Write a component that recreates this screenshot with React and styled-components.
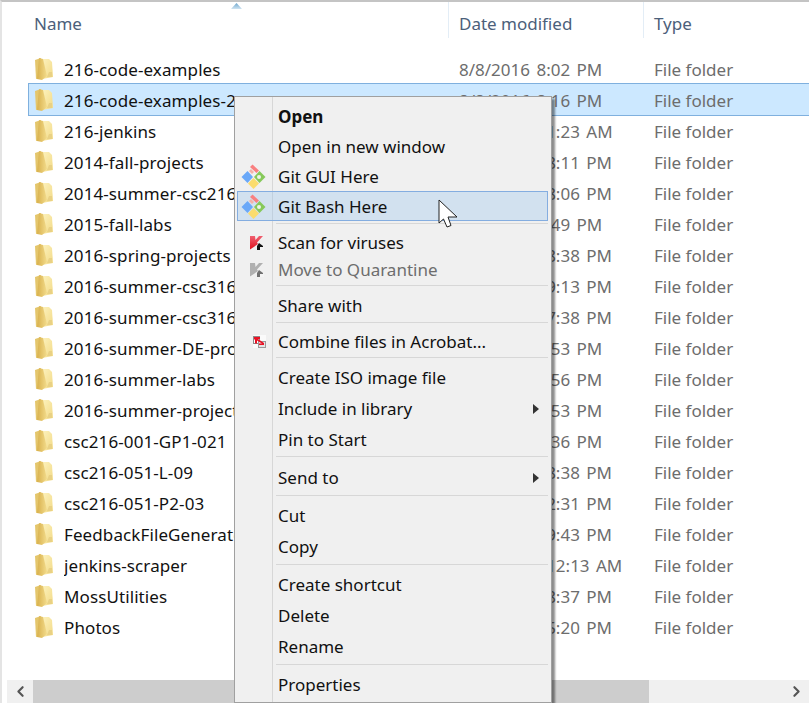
import React from 'react';
import styled, { createGlobalStyle } from 'styled-components';
import { ChevronLeft, ChevronRight } from 'lucide-react';

const folders = [
  ['216-code-examples', '8/8/2016 8:02 PM'],
  ['216-code-examples-2', '8/8/2016 8:16 PM', true],
  ['216-jenkins', '8/10/2016 1:23 AM'],
  ['2014-fall-projects', '12/9/2014 8:11 PM'],
  ['2014-summer-csc216', '8/12/2014 8:06 PM'],
  ['2015-fall-labs', '1/8/2016 4:49 PM'],
  ['2016-spring-projects', '5/10/2016 8:38 PM'],
  ['2016-summer-csc316-001', '8/11/2016 9:13 PM'],
  ['2016-summer-csc316-051', '8/11/2016 7:38 PM'],
  ['2016-summer-DE-projects', '7/8/2016 5:53 PM'],
  ['2016-summer-labs', '7/8/2016 5:56 PM'],
  ['2016-summer-projects', '7/8/2016 5:53 PM'],
  ['csc216-001-GP1-021', '2/2/2016 6:36 PM'],
  ['csc216-051-L-09', '5/11/2016 8:38 PM'],
  ['csc216-051-P2-03', '8/10/2016 2:31 PM'],
  ['FeedbackFileGenerator', '1/16/2016 9:43 PM'],
  ['jenkins-scraper', '8/15/2016 12:13 AM'],
  ['MossUtilities', '5/13/2016 8:37 PM'],
  ['Photos', '6/15/2016 5:20 PM'],
];

const Folder = () => (
  <FolderSvg viewBox="0 0 20 24">
    <defs>
      <linearGradient id="folderBack" x1="0" y1="0" x2="1" y2="1">
        <stop offset="0" stopColor="#fdf3c0" />
        <stop offset="1" stopColor="#f2d984" />
      </linearGradient>
      <linearGradient id="folderDoor" x1="0" y1="0" x2="1" y2="0">
        <stop offset="0" stopColor="#d8b04c" />
        <stop offset="1" stopColor="#f3dc8c" />
      </linearGradient>
    </defs>
    <path d="M1 3 L7 1 L7 21 L2 22 Z" fill="#e4c66c" />
    <path d="M7 2 L15 2 L18 5 L19 20 L8 22 Z" fill="url(#folderBack)" />
    <path d="M5 1 L9 2 L13 19 L8 23 L3 22 Z" fill="url(#folderDoor)" />
    <path d="M15 15 h3 v5 h-5 z" fill="#e9d184" />
  </FolderSvg>
);

const GitIcon = () => (
  <MenuIconSvg $size={25} $left={4} viewBox="0 0 25 25">
    <path d="M0.5 13 L6.5 7 L12 13 L6.5 19 Z" fill="#6aa8f8" />
    <path d="M13 13 L18.5 7 L24.5 13 L18.5 19 Z" fill="#86c95a" />
    <circle cx="18" cy="13" r="2" fill="#eef2e8" />
    <path d="M12.5 14 L18 19.5 L12.5 25 L7 19.5 Z" fill="#fbdc6d" />
    <path d="M9 3 L11.5 0.5 L18 6.5 L15.5 9 Z" fill="#f98080" />
    <path d="M8 7 L10 5 L13 8 L11 10 Z" fill="#f5b0a8" />
  </MenuIconSvg>
);

const KasperskyIcon = ({ muted }) => (
  <MenuIconSvg $size={14} $left={13} viewBox="0 0 14 14">
    <defs>
      <linearGradient id="kasRed" x1="0" y1="0" x2="0" y2="1">
        <stop offset="0" stopColor="#f06070" />
        <stop offset="1" stopColor="#e0101c" />
      </linearGradient>
    </defs>
    <path d="M0 0 H5 L5.5 4 L9 0 H13 L7 6.5 L8 8 L0 13.5 Z" fill={muted ? '#b0b0b0' : 'url(#kasRed)'} />
    <path d="M9 7 L13 10 V14 H7 V10 Z" fill={muted ? '#707070' : '#111'} />
    <path d="M10 11 h4 v3 h-4 z" fill="#f4f4f4" />
  </MenuIconSvg>
);

const AcrobatIcon = () => (
  <MenuIconSvg $size={13} $left={16} viewBox="0 0 13 13">
    <rect width="13" height="13" fill="#fafafa" />
    <rect x="0.5" y="1.5" width="6" height="7" fill="#fff" stroke="#8c8c8c" />
    <rect x="5.5" y="6.5" width="7" height="6" fill="#e4e4e4" stroke="#9a9a9a" />
    <path d="M1 2 h6 v2 h-2 l6 4 v2 h-5 v-1.5 h3 l-5 -3 v3 h-2 v-4 h-1 z" fill="#e81224" />
  </MenuIconSvg>
);

const Item = ({ h, icon, bold, muted, more, hot, children }) => (
  <MenuItem $h={h} $hot={hot}>
    <IconSlot>{icon}</IconSlot>
    <ItemLabel $bold={bold} $muted={muted}>{children}</ItemLabel>
    {more && <SubArrow />}
  </MenuItem>
);

const App = () => {
  return (
    <Page>
      <GlobalStyle />
      <SortArrow />
      <Header>
        <HeaderCell $w={447} $first>Name</HeaderCell>
        <HeaderCell $w={195}>Date modified</HeaderCell>
        <HeaderCell>Type</HeaderCell>
      </Header>
      <List>
        {folders.map(([name, date, selected]) => (
          <Row key={name} $selected={selected}>
            <Folder />
            <RowName>{name}</RowName>
            <RowDate>{date}</RowDate>
            <RowType>File folder</RowType>
          </Row>
        ))}
      </List>
      <Scrollbar>
        <ScrollButton><ChevronLeft size={17} strokeWidth={3} /></ScrollButton>
        <Thumb />
        <ScrollButton><ChevronRight size={17} strokeWidth={3} /></ScrollButton>
      </Scrollbar>

      <Menu>
        <Item h={30} bold>Open</Item>
        <Item h={30}>Open in new window</Item>
        <Item h={30} icon={<GitIcon />}>Git GUI Here</Item>
        <Item h={30} hot icon={<GitIcon />}>Git Bash Here</Item>
        <Separator $top={2} $bottom={5} />
        <Item h={27} icon={<KasperskyIcon />}>Scan for viruses</Item>
        <Item h={27} muted icon={<KasperskyIcon muted />}>Move to Quarantine</Item>
        <Separator $top={2} $bottom={4} />
        <Item h={30}>Share with</Item>
        <Separator $top={2} $bottom={4} />
        <Item h={29} icon={<AcrobatIcon />}>Combine files in Acrobat...</Item>
        <Separator $top={1} $bottom={4} />
        <Item h={31}>Create ISO image file</Item>
        <Item h={31} more>Include in library</Item>
        <Item h={31}>Pin to Start</Item>
        <Separator $top={1} $bottom={5} />
        <Item h={31} more>Send to</Item>
        <Separator $top={2} $bottom={4} />
        <Item h={31}>Cut</Item>
        <Item h={31}>Copy</Item>
        <Separator $top={2} $bottom={4} />
        <Item h={31}>Create shortcut</Item>
        <Item h={31}>Delete</Item>
        <Item h={31}>Rename</Item>
        <Separator $top={2} $bottom={4} />
        <Item h={31}>Properties</Item>
      </Menu>
      <Cursor viewBox="0 0 20 30">
        <path d="M1 1 V24 L5.5 20 L9 28 L13 26.5 L10 18 H19 Z" fill="#fff" stroke="#222" strokeWidth="1" />
      </Cursor>
    </Page>
  );
};

const GlobalStyle = createGlobalStyle`
html, body {
  margin: 0;
  padding: 0;
  background: #fff;
}
`;

const Page = styled.div`
position: relative;
width: 809px;
height: 703px;
overflow: hidden;
box-sizing: border-box;
display: flex;
flex-direction: column;
background: #fff;
border-top: 2px solid #c4c4c4;
border-left: 2px solid #e4e4e4;
font-family: "Noto Sans", "Open Sans", sans-serif;
font-size: 17px;
`;

const SortArrow = styled.div`
position: absolute;
left: 229px;
top: 1px;
width: 11px;
height: 6px;
clip-path: polygon(50% 0, 100% 100%, 0 100%);
background: linear-gradient(#6ea6cc, #cfe4f2);
`;

const Header = styled.div`
display: flex;
height: 36px;
flex-shrink: 0;
`;

const HeaderCell = styled.div`
box-sizing: border-box;
display: flex;
align-items: center;
width: ${p => (p.$w ? `${p.$w}px` : 'auto')};
padding: 6px 0 0 ${p => (p.$first ? '32px' : '10px')};
color: #4c607a;
border-right: ${p => (p.$w ? '1px solid #e3edf6' : 'none')};
`;

const List = styled.div`
flex: 1;
padding-top: 15px;
`;

const Row = styled.div`
display: flex;
align-items: center;
box-sizing: border-box;
height: 31px;
margin-left: 27px;
background: ${p => (p.$selected ? '#cce8ff' : 'transparent')};
outline: ${p => (p.$selected ? '1px solid #7fb0de' : 'none')};
`;

const FolderSvg = styled.svg`
width: 20px;
height: 24px;
margin-left: 5px;
flex-shrink: 0;
`;

const RowName = styled.span`
width: 395px;
margin-left: 10px;
padding-top: 2px;
flex-shrink: 0;
color: #111;
letter-spacing: 0.1px;
white-space: nowrap;
overflow: hidden;
`;

const RowDate = styled.span`
width: 195px;
padding-top: 2px;
flex-shrink: 0;
color: #6d6d6d;
word-spacing: 2px;
white-space: nowrap;
`;

const RowType = styled.span`
padding-top: 2px;
color: #6d6d6d;
white-space: nowrap;
`;

const Scrollbar = styled.div`
height: 23px;
flex-shrink: 0;
display: flex;
align-items: center;
margin-left: 5px;
background: #f0f0f0;
`;

const ScrollButton = styled.div`
width: 26px;
height: 100%;
display: flex;
align-items: center;
justify-content: center;
flex-shrink: 0;
color: #555;
`;

const Thumb = styled.div`
width: 616px;
height: 100%;
background: #cdcdcd;
margin-right: auto;
`;

const Menu = styled.div`
position: absolute;
left: 232px;
top: 94px;
width: 318px;
height: 607px;
box-sizing: border-box;
padding: 4px 3px 0 2px;
background: linear-gradient(90deg, #f0f0f0 37px, #d7d7d7 37px, #d7d7d7 38px, #f0f0f0 38px);
border: 1px solid #a0a0a0;
box-shadow: 3px 3px 2px rgba(0, 0, 0, 0.45);
`;

const MenuItem = styled.div`
display: flex;
align-items: center;
box-sizing: border-box;
height: ${p => p.$h}px;
color: #111;
${p => p.$hot && `
  background: rgba(144, 192, 240, 0.3);
  outline: 1px solid #84ade0;
  outline-offset: -1px;
`}
`;

const IconSlot = styled.div`
width: 36px;
flex-shrink: 0;
display: flex;
align-items: center;
`;

const MenuIconSvg = styled.svg`
width: ${p => p.$size}px;
height: ${p => p.$size}px;
margin-left: ${p => p.$left}px;
flex-shrink: 0;
`;

const ItemLabel = styled.span`
margin-left: 5px;
font-weight: ${p => (p.$bold ? 700 : 400)};
color: ${p => (p.$muted ? '#6d6d6d' : 'inherit')};
white-space: nowrap;
`;

const SubArrow = styled.span`
margin-left: auto;
margin-right: 9px;
border-top: 5px solid transparent;
border-bottom: 5px solid transparent;
border-left: 6px solid #333;
`;

const Separator = styled.div`
height: 1px;
margin: ${p => p.$top}px 0 ${p => p.$bottom}px 39px;
background: #d7d7d7;
`;

const Cursor = styled.svg`
position: absolute;
left: 436px;
top: 197px;
width: 20px;
height: 30px;
`;

export default App;
